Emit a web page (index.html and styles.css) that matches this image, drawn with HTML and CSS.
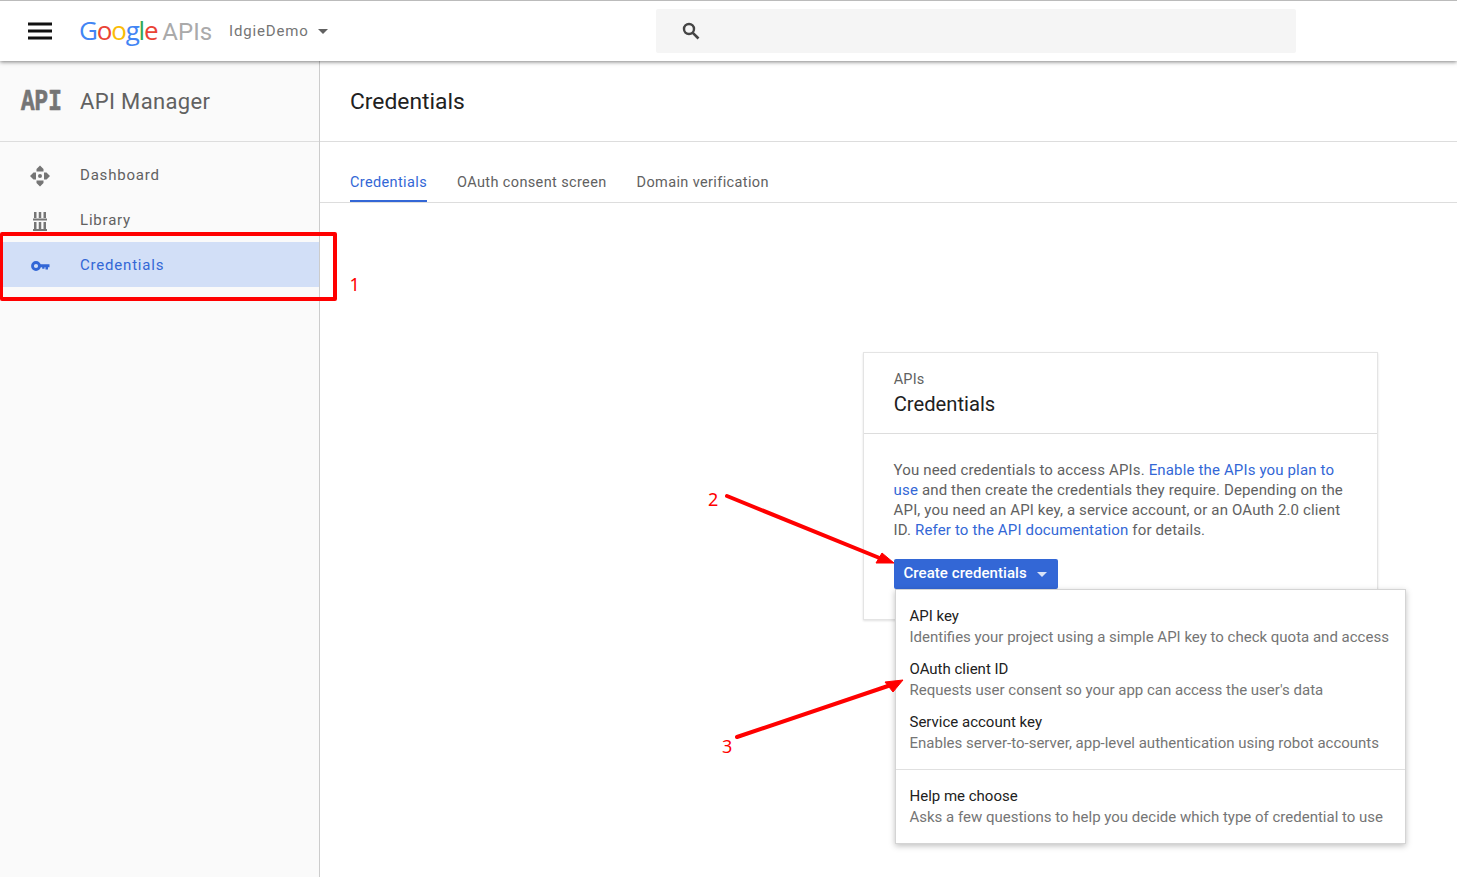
FILE: index.html
```html
<!DOCTYPE html>
<html lang="en">
<head>
<meta charset="utf-8">
<title>Credentials - API Manager</title>
<link rel="stylesheet" href="styles.css">
</head>
<body>
<header class="topbar">
  <svg class="menu-icon" width="24" height="18" viewBox="0 0 24 18"><path d="M0 2h24M0 9h24M0 16h24" stroke="#111" stroke-width="3"/></svg>
  <div class="logo"><span class="g-blue">G</span><span class="g-red">o</span><span class="g-yellow">o</span><span class="g-blue">g</span><span class="g-green">l</span><span class="g-red">e</span><span class="logo-apis">APIs</span></div>
  <div class="project">IdgieDemo</div>
  <span class="caret"></span>
  <div class="search">
    <svg width="18" height="18" viewBox="0 0 18 18"><circle cx="7" cy="7" r="5" fill="none" stroke="#444" stroke-width="2.4"/><path d="M10.800 10.800L16.500 16.500" stroke="#444" stroke-width="2.600"/></svg>
  </div>
</header>
<div class="layout">
  <aside class="sidebar">
    <div class="side-head">
      <span class="api-glyph">API</span>
      <span class="side-title">API Manager</span>
    </div>
    <nav class="nav">
      <a class="nav-item">
        <svg class="nav-icon dash" width="20" height="22" viewBox="0 0 20 22" fill="#757575"><path d="M10 0.500L13.500 4V6.500H6.500V4zM10 21.500L6.500 18V15.500H13.500V18zM0 11L3.500 7.500H6V14.500H3.500zM20 11L16.500 14.500H14V7.500H16.500z"/><circle cx="10" cy="11" r="2"/></svg>
        Dashboard
      </a>
      <a class="nav-item">
        <svg class="nav-icon lib" width="20" height="20" viewBox="0 0 20 20" fill="#757575"><path d="M4 1h2.500v6H4zM8.750 1h2.500v6h-2.500zM13.500 1H16v6h-2.500zM4 11h2.500v7H4zM8.750 11h2.500v7h-2.500zM13.500 11H16v7h-2.500zM3 7.500h14v2H3zM3 18h14v2H3z"/></svg>
        Library
      </a>
      <a class="nav-item active">
        <svg class="nav-icon" width="20" height="20" viewBox="0 0 20 20"><circle cx="6" cy="11" r="3.500" fill="none" stroke="#3367d6" stroke-width="2.800"/><path d="M9 9.200h10.500v3h-1.500v2.300h-2.500v-2.300h-1v1.500h-2.300v-1.500H9z" fill="#3367d6"/></svg>
        Credentials
      </a>
    </nav>
  </aside>
  <main class="content">
    <div class="page-head">Credentials</div>
    <div class="tabs">
      <a class="tab active">Credentials</a>
      <a class="tab">OAuth consent screen</a>
      <a class="tab">Domain verification</a>
    </div>
    <section class="card">
      <div class="card-head">
        <div class="card-kicker">APIs</div>
        <div class="card-title">Credentials</div>
      </div>
      <div class="card-body">
        <p class="card-text">You need credentials to access APIs. <a class="link">Enable the APIs you plan to use</a> and then create the credentials they require. Depending on the API, you need an API key, a service account, or an OAuth 2.0 client ID. <a class="link">Refer to the API documentation</a> for details.</p>
        <div class="btn-wrap">
          <button class="btn">Create credentials<span class="btn-caret"></span></button>
          <div class="menu">
            <div class="menu-group">
              <div class="menu-item"><div class="menu-name">API key</div><div class="menu-desc">Identifies your project using a simple API key to check quota and access</div></div>
              <div class="menu-item"><div class="menu-name">OAuth client ID</div><div class="menu-desc">Requests user consent so your app can access the user's data</div></div>
              <div class="menu-item"><div class="menu-name">Service account key</div><div class="menu-desc">Enables server-to-server, app-level authentication using robot accounts</div></div>
            </div>
            <div class="menu-group last">
              <div class="menu-item"><div class="menu-name">Help me choose</div><div class="menu-desc">Asks a few questions to help you decide which type of credential to use</div></div>
            </div>
          </div>
        </div>
      </div>
    </section>
  </main>
</div>
<div class="redbox"></div>
<span class="note note-1">1</span>
<span class="note note-2">2</span>
<span class="note note-3">3</span>
<svg class="arrows" width="1457" height="877" viewBox="0 0 1457 877">
  <path d="M727 496L882 559" stroke="#f00" stroke-width="4" stroke-linecap="round"/>
  <path d="M894 563L876 563L882 553z" fill="#f00" stroke="#f00"/>
  <path d="M737 737L888 686" stroke="#f00" stroke-width="4" stroke-linecap="round"/>
  <path d="M903 680L893 692L885 682z" fill="#f00" stroke="#f00"/>
</svg>
</body>
</html>
```
FILE: styles.css
```css
* { box-sizing: border-box; }
html, body { margin: 0; height: 877px; overflow: hidden; }
body { font-family: Roboto, "Liberation Sans", sans-serif; color: #616161; background: #fff; font-size: 14px; }

.topbar {
  height: 61px;
  border-top: 1px solid #bbb;
  display: flex;
  align-items: center;
  background: #fff;
  position: relative;
  z-index: 2;
  box-shadow: 0 1px 4px rgba(0,0,0,.5);
  padding-left: 28px;
}
.menu-icon { margin-right: 27px; width: 24px; height: 18px; flex: none; }
.logo { font-family: "Open Sans", sans-serif; font-size: 26px; line-height: 30px; letter-spacing: -1.200px; width: 150px; flex: none; }
.g-blue { color: #4285f4; }
.g-red { color: #ea4335; }
.g-yellow { color: #fbbc05; }
.g-green { color: #34a853; }
.logo-apis { color: #aaa; margin-left: 5px; font-family: Roboto, sans-serif; font-size: 24px; letter-spacing: 0; font-weight: 400; }
.project { font-size: 15px; color: #757575; letter-spacing: .85px; width: 89px; flex: none; }
.caret { width: 0; height: 0; border: 5px solid transparent; border-top-color: #616161; border-bottom: 0; flex: none; }
.search {
  margin-left: 328px;
  width: 640px;
  height: 44px;
  background: #f5f5f5;
  border-radius: 2px;
  display: flex;
  align-items: center;
  padding-left: 26px;
  flex: none;
}

.layout { display: flex; height: 816px; }
.sidebar { width: 320px; flex: none; background: #fafafa; border-right: 1px solid #ccc; }
.side-head { height: 81px; border-bottom: 1px solid #ddd; display: flex; align-items: center; padding-left: 20px; }
.api-glyph {
  width: 40px;
  margin: 2px 20px 0 1px;
  margin-right: 19px;
  font-family: "Liberation Mono", monospace;
  font-weight: 700;
  font-size: 29px;
  color: #757575;
  -webkit-text-stroke: .7px #757575;
  transform: scaleX(.78);
  transform-origin: left center;
  white-space: nowrap;
  line-height: 1;
}
.side-title { font-size: 22px; letter-spacing: .35px; color: #616161; }
.nav { padding-top: 10px; }
.nav-item { height: 45px; display: flex; align-items: center; padding-left: 30px; font-size: 15px; letter-spacing: .8px; color: #616161; }
.nav-icon { margin-right: 30px; flex: none; }
.nav-icon.dash { margin-top: 2px; }
.nav-icon.lib { margin-top: 3px; }
.nav-item.active { background: #d2dff7; color: #3367d6; }

.content { flex: 1; min-width: 0; }
.page-head { height: 81px; border-bottom: 1px solid #ddd; display: flex; align-items: center; padding-left: 30px; font-size: 22.800px; color: #212121; }
.tabs { height: 61px; border-bottom: 1px solid #ddd; display: flex; align-items: flex-end; gap: 30px; padding-left: 30px; }
.tab { height: 28px; line-height: 17px; font-size: 14.500px; letter-spacing: .37px; color: #616161; }
.tab.active { color: #3367d6; border-bottom: 2px solid #3367d6; }

.card {
  margin: 149px 0 0 543px;
  width: 515px;
  height: 268px;
  border: 1px solid #e4e4e4;
  box-shadow: 0 1px 2px rgba(0,0,0,.12);
  background: #fff;
}
.card-head { height: 81px; border-bottom: 1px solid #ddd; padding: 18px 30px 0 29.700px; }
.card-kicker { font-size: 14.500px; line-height: 18px; color: #616161; letter-spacing: .2px; }
.card-title { font-size: 20.200px; line-height: 30px; color: #212121; }
.card-body { padding: 26px 30px 0 29.600px; }
.card-text { margin: 0; font-size: 15px; line-height: 20px; letter-spacing: .15px; color: #616161; }
.link { color: #3367d6; }
.btn-wrap { position: relative; margin-top: 19px; margin-left: .4px; }
.btn {
  display: flex;
  align-items: center;
  width: 164px;
  height: 30px;
  padding: 0 0 2px 9.500px;
  background: #3367d6;
  border: 0;
  border-radius: 2px;
  color: #fff;
  font: 500 15px Roboto, sans-serif;
  letter-spacing: .06px;
}
.btn-caret { width: 0; height: 0; border: 5px solid transparent; border-top-color: #d8e2f8; border-bottom: 0; margin-left: 10px; margin-top: 2px; }
.menu {
  position: absolute;
  left: 1px;
  top: 30px;
  width: 511px;
  height: 255px;
  background: #fff;
  border: 1px solid #d4d4d4;
  box-shadow: 0 2px 6px rgba(0,0,0,.25);
  z-index: 3;
}
.menu-group { padding: 16px 14px 0 13.500px; height: 180px; border-bottom: 1px solid #e0e0e0; }
.menu-group.last { border-bottom: 0; height: auto; }
.menu-item { height: 53px; }
.menu-name { font-size: 15px; line-height: 21px; color: #212121; }
.menu-desc { font-size: 15px; line-height: 21px; color: #757575; white-space: nowrap; }

.redbox { position: absolute; left: 0; top: 232px; width: 337px; height: 69px; border: 4px solid #f00; border-left-width: 3px; border-radius: 2px; z-index: 4; }
.note { position: absolute; color: #f00; font: 18px "Noto Sans", sans-serif; line-height: 22px; z-index: 4; }
.note-1 { left: 349.500px; top: 273px; }
.note-2 { left: 708px; top: 488px; }
.note-3 { left: 722px; top: 735px; }
.arrows { position: absolute; left: 0; top: 0; z-index: 5; pointer-events: none; }
```
